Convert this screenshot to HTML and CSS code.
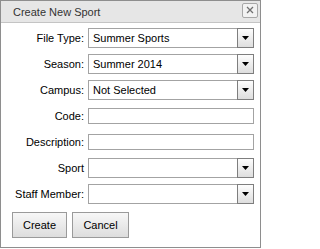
FILE: index.html
```html
<!DOCTYPE html>
<html>
<head>
<meta charset="utf-8">
<link rel="stylesheet" href="styles.css">
</head>
<body>
<div class="dialog">
  <div class="header">
    <span class="title">Create New Sport</span>
    <span class="close"><svg width="8" height="8" viewBox="0 0 8 8"><path d="M1 1L7 7M7 1L1 7" stroke="#707070" stroke-width="1.3" fill="none"/></svg></span>
  </div>
  <div class="form">
    <label class="lbl">File Type:</label>
    <div class="sel"><span class="val">Summer Sports</span><span class="arrow"><svg width="7" height="4" viewBox="0 0 7 4"><path d="M0 0H7L3.5 4Z" fill="#000"/></svg></span></div>
    <label class="lbl">Season:</label>
    <div class="sel"><span class="val">Summer 2014</span><span class="arrow"><svg width="7" height="4" viewBox="0 0 7 4"><path d="M0 0H7L3.5 4Z" fill="#000"/></svg></span></div>
    <label class="lbl">Campus:</label>
    <div class="sel"><span class="val">Not Selected</span><span class="arrow"><svg width="7" height="4" viewBox="0 0 7 4"><path d="M0 0H7L3.5 4Z" fill="#000"/></svg></span></div>
    <label class="lbl">Code:</label>
    <div class="inp"></div>
    <label class="lbl">Description:</label>
    <div class="inp"></div>
    <label class="lbl">Sport</label>
    <div class="sel"><span class="val"></span><span class="arrow"><svg width="7" height="4" viewBox="0 0 7 4"><path d="M0 0H7L3.5 4Z" fill="#000"/></svg></span></div>
    <label class="lbl">Staff Member:</label>
    <div class="sel"><span class="val"></span><span class="arrow"><svg width="7" height="4" viewBox="0 0 7 4"><path d="M0 0H7L3.5 4Z" fill="#000"/></svg></span></div>
  </div>
  <div class="buttons">
    <button class="btn btn-create">Create</button>
    <button class="btn btn-cancel">Cancel</button>
  </div>
</div>
</body>
</html>
```
FILE: styles.css
```css
html, body {
  margin: 0;
  padding: 0;
  background: #fff;
}
body {
  font-family: "Liberation Sans", Arial, sans-serif;
  font-size: 11px;
  color: #000;
}
.dialog {
  width: 261px;
  height: 248px;
  box-sizing: border-box;
  border: 1px solid #8e8e8e;
  background: #fff;
  display: flex;
  flex-direction: column;
}
.header {
  height: 21px;
  background: #e6e6e6;
  border-bottom: 1px solid #c4c4c4;
  display: flex;
  align-items: center;
  justify-content: space-between;
  padding: 0 2px 0 12px;
}
.title {
  color: #333;
  font-size: 11px;
}
.close {
  box-sizing: border-box;
  width: 16px;
  height: 15px;
  border: 1px solid #a8a8a8;
  border-radius: 2px;
  background: #f2f2f2;
  display: flex;
  align-items: center;
  justify-content: center;
  margin-top: -3px;
}
.form {
  display: grid;
  grid-template-columns: 83px 166px;
  grid-auto-rows: 20px;
  column-gap: 4px;
  row-gap: 6px;
  padding-top: 5px;
}
.lbl {
  text-align: right;
  align-self: center;
  white-space: nowrap;
}
.sel {
  box-sizing: border-box;
  height: 20px;
  border: 1px solid #a3a3a3;
  display: flex;
  align-items: center;
  justify-content: space-between;
  background: #fff;
}
.val {
  padding-left: 4px;
}
.arrow {
  box-sizing: border-box;
  width: 17px;
  height: 20px;
  margin: -1px -1px -1px 0;
  border: 1px solid #7e7e7e;
  background: linear-gradient(#fdfdfd, #dedede);
  display: flex;
  align-items: center;
  justify-content: center;
}
.inp {
  box-sizing: border-box;
  height: 16px;
  align-self: center;
  border: 1px solid #a3a3a3;
  background: #fff;
}
.buttons {
  display: flex;
  gap: 5px;
  padding: 8px 0 0 11px;
}
.btn {
  height: 26px;
  box-sizing: border-box;
  border: 1px solid #9a9a9a;
  background: linear-gradient(#f7f7f7, #dddddd);
  font-family: "Liberation Sans", Arial, sans-serif;
  font-size: 11px;
  color: #000;
  padding: 0;
}
.btn-create { width: 55px; }
.btn-cancel { width: 57px; }
```
